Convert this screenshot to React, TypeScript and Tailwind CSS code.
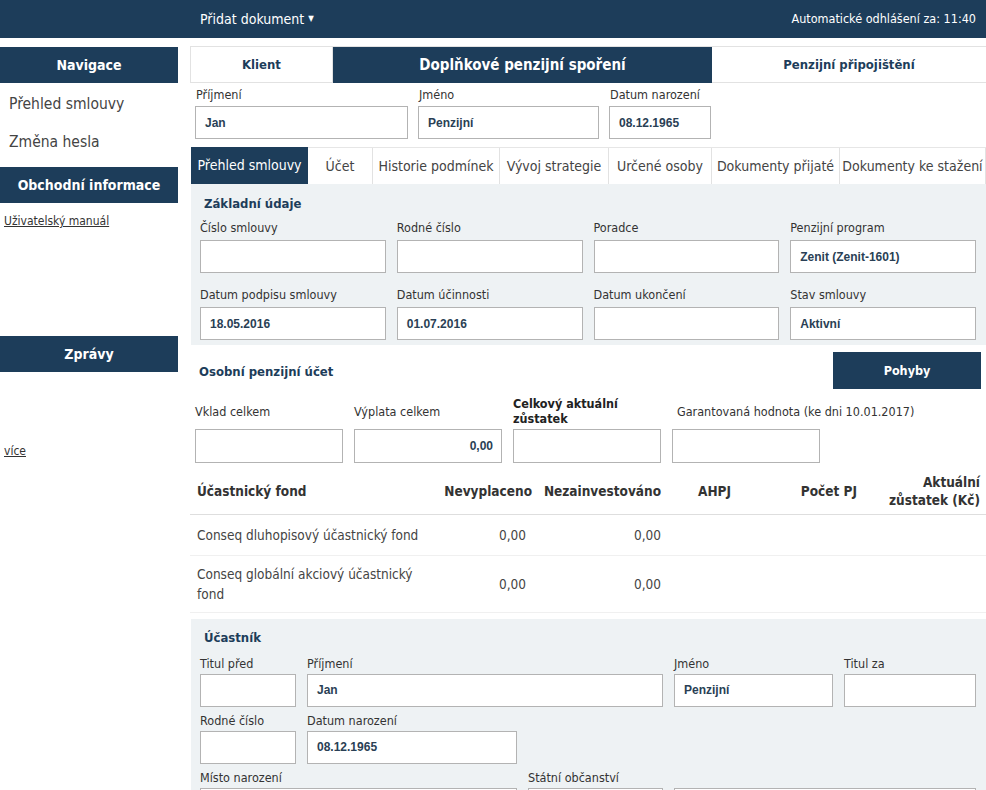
import React from "react";

const NAVY = "bg-[#1d3d5a]";

function Field({ value, className = "", right = false }: { value?: string; className?: string; right?: boolean }) {
  return (
    <div
      className={`h-[33px] border border-[#b3b3b3] bg-white flex items-center text-[12px] font-bold text-[#2a3f55] ${right ? "justify-end pr-[8px]" : "pl-[9px]"} ${className}`}
      style={{ fontFamily: '"Liberation Sans", Arial, sans-serif' }}
    >
      {value}
    </div>
  );
}

function Label({ children, className = "" }: { children: React.ReactNode; className?: string }) {
  return <div className={`text-[12.5px] leading-[16px] text-[#333] whitespace-nowrap ${className}`}>{children}</div>;
}

function SideHeader({ children, className = "" }: { children: React.ReactNode; className?: string }) {
  return (
    <div className={`${NAVY} h-[36px] flex items-center justify-center text-white font-bold text-[14px] ${className}`}>
      {children}
    </div>
  );
}

export default function App() {
  const font = { fontFamily: '"DejaVu Sans Condensed", "DejaVu Sans", Verdana, sans-serif' };
  return (
    <div className="w-[986px] h-[790px] overflow-hidden bg-white text-[#333]" style={font}>
      {/* Top bar */}
      <div className={`${NAVY} h-[38px] flex items-center justify-between pl-[200px] pr-[10px] text-white`}>
        <div className="text-[14px] flex items-center gap-[4px]">
          Přidat dokument <span className="text-[8px]">▼</span>
        </div>
        <div className="text-[12.5px]">Automatické odhlášení za: 11:40</div>
      </div>

      <div className="flex gap-[12px] mt-[8px]">
        {/* Sidebar */}
        <div className="w-[178px] shrink-0">
          <SideHeader className="mt-[1px]">Navigace</SideHeader>
          <div className="h-[38px] mt-[3px] flex items-center pl-[9px] text-[15.5px] text-[#444]">Přehled smlouvy</div>
          <div className="h-[38px] flex items-center pl-[9px] text-[15.5px] text-[#444]">Změna hesla</div>
          <SideHeader className="mt-[5px]">Obchodní informace</SideHeader>
          <div className="pl-[4px] pt-[9px] text-[12px] underline text-[#333]">Uživatelský manuál</div>
          <SideHeader className="mt-[106px]">Zprávy</SideHeader>
          <div className="pl-[4px] mt-[70px] text-[12px] underline text-[#333]">více</div>
        </div>

        {/* Main */}
        <div className="flex-1 min-w-0">
          {/* Product tabs */}
          <div className="flex h-[37px] border-t border-[#e2e2e2]">
            <div className="w-[143px] border border-t-0 border-[#e2e2e2] flex items-center justify-center font-bold text-[13px] text-[#1d3d5a]">
              Klient
            </div>
            <div className={`${NAVY} w-[379px] flex items-center justify-center font-bold text-[15px] text-white`}>
              Doplňkové penzijní spoření
            </div>
            <div className="flex-1 border-b border-[#e2e2e2] flex items-center justify-center font-bold text-[13px] text-[#1d3d5a]">
              Penzijní připojištění
            </div>
          </div>

          {/* Client fields */}
          <div className="flex gap-[10px] pl-[5px] mt-[4px]">
            <div className="w-[213px]">
              <Label className="pl-[1px]">Příjmení</Label>
              <Field value="Jan" className="mt-[3px]" />
            </div>
            <div className="w-[181px]">
              <Label className="pl-[1px]">Jméno</Label>
              <Field value="Penzijní" className="mt-[3px]" />
            </div>
            <div className="w-[102px]">
              <Label className="pl-[1px]">Datum narození</Label>
              <Field value="08.12.1965" className="mt-[3px]" />
            </div>
          </div>

          {/* Sub tabs */}
          <div className="flex h-[37px] mt-[8px] ml-[1px] text-[14px] text-[#444] border-t border-[#e6e6e6]">
            {[
              ["Přehled smlouvy", "w-[117px]"],
              ["Účet", "w-[65px]"],
              ["Historie podmínek", "w-[127px]"],
              ["Vývoj strategie", "w-[109px]"],
              ["Určené osoby", "w-[103px]"],
              ["Dokumenty přijaté", "w-[128px]"],
              ["Dokumenty ke stažení", "flex-1"],
            ].map(([t, w], i) => (
              <div
                key={t}
                className={`${w} flex items-center justify-center whitespace-nowrap ${
                  i === 0 ? `${NAVY} text-white -mt-px` : "border-r border-[#e2e2e2]"
                }`}
              >
                {t}
              </div>
            ))}
          </div>

          {/* Základní údaje */}
          <div className="ml-[1px] bg-[#eef2f4] pt-[12px] pb-[5px] pl-[9px] pr-[10px]">
            <div className="pl-[4px] text-[13px] leading-[16px] font-bold text-[#1d3d5a]">Základní údaje</div>
            <div className="grid grid-cols-4 gap-x-[11px] mt-[8px]">
              {[
                ["Číslo smlouvy", ""],
                ["Rodné číslo", ""],
                ["Poradce", ""],
                ["Penzijní program", "Zenit (Zenit-1601)"],
              ].map(([l, v]) => (
                <div key={l}>
                  <Label>{l}</Label>
                  <Field value={v} className="mt-[4px]" />
                </div>
              ))}
            </div>
            <div className="grid grid-cols-4 gap-x-[11px] mt-[14px]">
              {[
                ["Datum podpisu smlouvy", "18.05.2016"],
                ["Datum účinnosti", "01.07.2016"],
                ["Datum ukončení", ""],
                ["Stav smlouvy", "Aktivní"],
              ].map(([l, v]) => (
                <div key={l}>
                  <Label>{l}</Label>
                  <Field value={v} className="mt-[4px]" />
                </div>
              ))}
            </div>
          </div>

          {/* Osobní penzijní účet */}
          <div className="flex items-center justify-between mt-[7px] pl-[9px] pr-[5px]">
            <div className="text-[13px] font-bold text-[#1d3d5a] pt-[2px]">Osobní penzijní účet</div>
            <div className={`${NAVY} w-[148px] h-[37px] flex items-center justify-center text-white font-bold text-[12.5px] pt-[2px]`}>
              Pohyby
            </div>
          </div>
          <div className="flex gap-[11px] pl-[5px] mt-[4px]">
            {[
              ["Vklad celkem", "", false, ""],
              ["Výplata celkem", "0,00", false, ""],
              ["Celkový aktuální zůstatek", "", true, ""],
              ["Garantovaná hodnota (ke dni 10.01.2017)", "", false, "pl-[5px]"],
            ].map(([l, v, b, pad], i) => (
              <div key={l as string} className="w-[148px] shrink-0">
                <div className="h-[36px] flex items-center">
                  <div
                    className={`text-[12.5px] leading-[15px] ${b ? "font-bold text-[#222] whitespace-normal" : "text-[#333] whitespace-nowrap"} ${pad}`}
                  >
                    {l as string}
                  </div>
                </div>
                <Field value={v as string} right={i === 1} className="h-[34px]" />
              </div>
            ))}
          </div>

          {/* Fund table */}
          <table className="w-full mt-[6px] border-collapse table-fixed">
            <colgroup>
              <col className="w-[250px]" />
              <col className="w-[96px]" />
              <col className="w-[129px]" />
              <col className="w-[105px]" />
              <col className="w-[92px]" />
              <col />
            </colgroup>
            <thead>
              <tr className="h-[45px] border-b border-[#dedede] text-[13.5px] font-bold text-[#333] leading-[18px]">
                <th className="text-left pl-[7px] font-bold">Účastnický fond</th>
                <th className="text-right pr-[4px] font-bold whitespace-nowrap">Nevyplaceno</th>
                <th className="text-right pr-[4px] font-bold whitespace-nowrap">Nezainvestováno</th>
                <th className="text-left pl-[33px] font-bold">AHPJ</th>
                <th className="text-right pr-[5px] font-bold whitespace-nowrap">Počet PJ</th>
                <th className="text-right pr-[6px] font-bold">
                  Aktuální
                  <br />
                  zůstatek (Kč)
                </th>
              </tr>
            </thead>
            <tbody className="text-[13.5px] text-[#444] leading-[20px]">
              <tr className="h-[41px] border-b border-[#f0f0f0]">
                <td className="pl-[7px]">Conseq dluhopisový účastnický fond</td>
                <td className="text-right pr-[10px]">0,00</td>
                <td className="text-right pr-[4px]">0,00</td>
                <td></td>
                <td></td>
                <td></td>
              </tr>
              <tr className="h-[57px] border-b border-[#f0f0f0]">
                <td className="pl-[7px] pr-[20px]">Conseq globální akciový účastnický fond</td>
                <td className="text-right pr-[10px]">0,00</td>
                <td className="text-right pr-[4px]">0,00</td>
                <td></td>
                <td></td>
                <td></td>
              </tr>
            </tbody>
          </table>

          {/* Účastník */}
          <div className="ml-[1px] mt-[6px] bg-[#eef2f4] pt-[11px] pl-[9px] pr-[10px] pb-[20px]">
            <div className="pl-[4px] text-[13px] leading-[16px] font-bold text-[#1d3d5a]">Účastník</div>
            <div className="flex gap-[11px] mt-[10px]">
              <div className="w-[96px]">
                <Label>Titul před</Label>
                <Field className="mt-[2px] h-[32px]" />
              </div>
              <div className="w-[356px]">
                <Label>Příjmení</Label>
                <Field value="Jan" className="mt-[2px] h-[32px]" />
              </div>
              <div className="w-[159px]">
                <Label>Jméno</Label>
                <Field value="Penzijní" className="mt-[2px] h-[32px]" />
              </div>
              <div className="w-[132px]">
                <Label>Titul za</Label>
                <Field className="mt-[2px] h-[32px]" />
              </div>
            </div>
            <div className="flex gap-[11px] mt-[6px]">
              <div className="w-[96px]">
                <Label>Rodné číslo</Label>
                <Field className="mt-[2px] h-[32px]" />
              </div>
              <div className="w-[210px]">
                <Label>Datum narození</Label>
                <Field value="08.12.1965" className="mt-[2px] h-[32px]" />
              </div>
            </div>
            <div className="flex gap-[11px] mt-[6px]">
              <div className="w-[317px]">
                <Label>Místo narození</Label>
                <Field className="mt-[2px] h-[32px]" />
              </div>
              <div className="w-[135px]">
                <Label>Státní občanství</Label>
                <Field className="mt-[2px] h-[32px]" />
              </div>
              <div className="w-[302px]">
                <Label>&nbsp;</Label>
                <Field className="mt-[2px] h-[32px]" />
              </div>
            </div>
          </div>
        </div>
      </div>
    </div>
  );
}
